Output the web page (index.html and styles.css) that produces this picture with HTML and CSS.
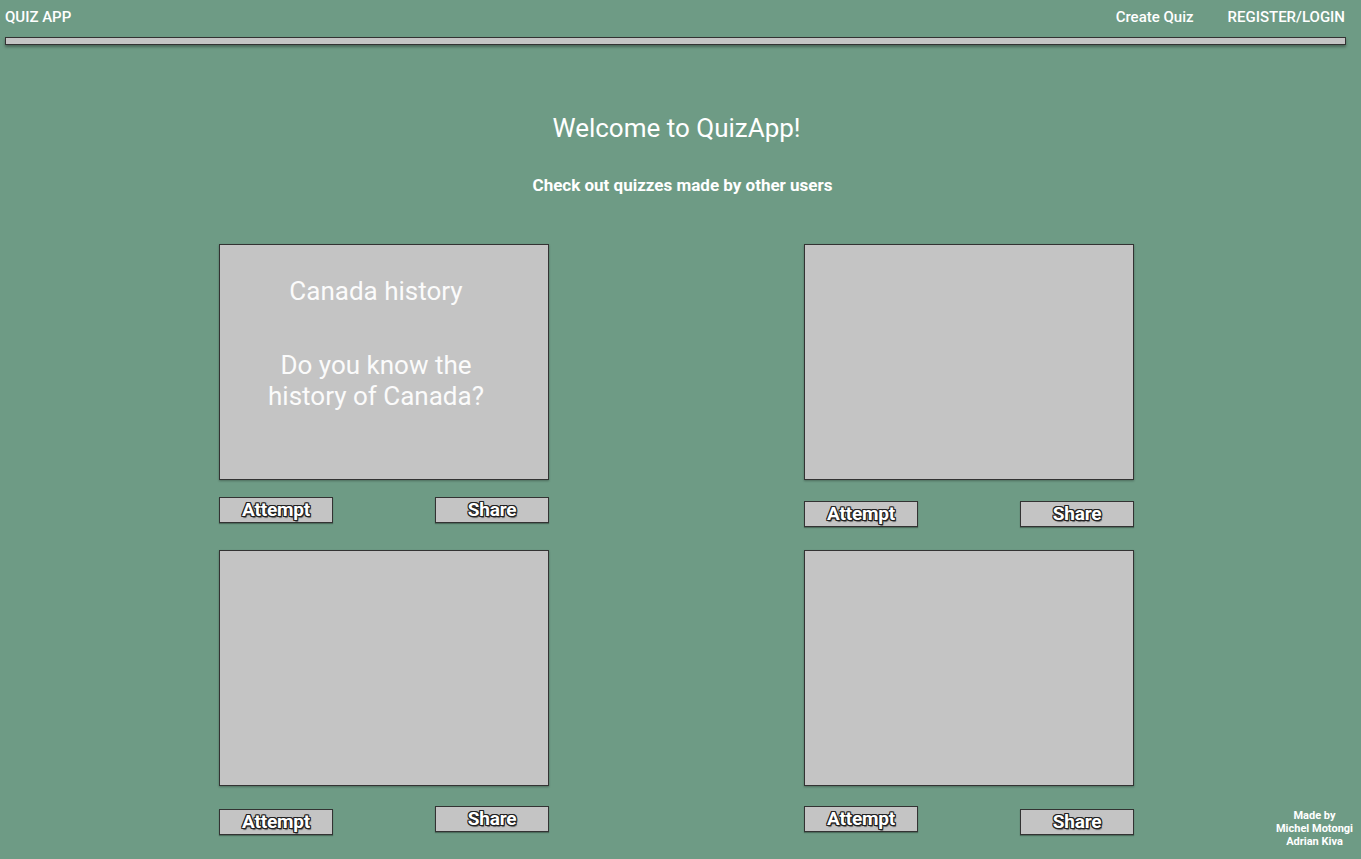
FILE: index.html
```html
<!DOCTYPE html>
<html lang="en">
<head>
<meta charset="utf-8">
<title>Quiz App</title>
<link rel="stylesheet" href="styles.css">
</head>
<body>
<header class="topbar">
  <div class="brand">QUIZ APP</div>
  <nav class="nav">
    <a class="nav-link" href="#">Create Quiz</a>
    <a class="nav-link" href="#">REGISTER/LOGIN</a>
  </nav>
</header>
<div class="rule"></div>
<main class="main">
  <h1 class="title">Welcome to QuizApp!</h1>
  <p class="subtitle">Check out quizzes made by other users</p>
  <section class="grid">
    <div class="quiz">
      <div class="card">
        <div class="card-title">Canada history</div>
        <div class="card-desc">Do you know the<br>history of Canada?</div>
      </div>
      <div class="actions">
        <button class="btn">Attempt</button>
        <button class="btn">Share</button>
      </div>
    </div>
    <div class="quiz">
      <div class="card"></div>
      <div class="actions shift">
        <button class="btn">Attempt</button>
        <button class="btn">Share</button>
      </div>
    </div>
    <div class="quiz">
      <div class="card"></div>
      <div class="actions tight">
        <button class="btn low">Attempt</button>
        <button class="btn">Share</button>
      </div>
    </div>
    <div class="quiz">
      <div class="card"></div>
      <div class="actions tight">
        <button class="btn">Attempt</button>
        <button class="btn low">Share</button>
      </div>
    </div>
  </section>
</main>
<footer class="credits">Made by<br>Michel Motongi<br>Adrian Kiva</footer>
</body>
</html>
```
FILE: styles.css
```css
* { box-sizing: border-box; }
html, body { margin: 0; padding: 0; }
body {
  background: #6e9b85;
  font-family: Roboto, "Noto Sans", sans-serif;
  color: #ffffff;
  width: 1361px;
  height: 859px;
  overflow: hidden;
  position: relative;
}
.topbar {
  display: flex;
  justify-content: space-between;
  align-items: center;
  height: 33px;
  padding: 0 16px 0 5px;
}
.brand {
  font-size: 15px;
  font-weight: 500;
}
.nav { display: flex; gap: 34px; }
.nav-link {
  color: #fff;
  text-decoration: none;
  font-size: 15px;
  font-weight: 500;
}
.rule {
  margin: 4px 15px 0 5px;
  height: 8px;
  background: #c4c4c4;
  border: 1px solid #333;
  box-shadow: 0 2px 3px rgba(0,0,0,0.35);
}
.main {
  padding-right: 8px;
  display: flex;
  flex-direction: column;
  align-items: center;
}
.title {
  margin: 68px 0 0;
  font-size: 26px;
  font-weight: 400;
  line-height: 30px;
}
.subtitle {
  margin: 32px 0 0;
  font-size: 17px;
  font-weight: 700;
  line-height: 20px;
  padding-left: 12px;
}
.grid {
  margin-top: 49px;
  display: grid;
  grid-template-columns: 330px 330px;
  column-gap: 255px;
  row-gap: 23px;
}
.card {
  height: 236px;
  background: #c4c4c4;
  border: 1px solid #333;
  box-shadow: 0 1px 2px rgba(0,0,0,0.3);
  display: flex;
  flex-direction: column;
  align-items: center;
  padding: 31px 16px 0 0;
  color: #fbfbfb;
  font-size: 26px;
  line-height: 31px;
  text-align: center;
}
.card-title { margin-bottom: 43px; }
.actions {
  display: flex;
  justify-content: space-between;
  align-items: flex-start;
  margin-top: 17px;
  height: 26px;
}
.actions.shift { margin-top: 21px; }
.actions.tight { margin-top: 20px; }
.btn {
  width: 114px;
  height: 26px;
  padding: 0;
  background: #c4c4c4;
  border: 1px solid #333;
  box-shadow: 0 1px 1px rgba(0,0,0,0.3);
  font-family: Roboto, "Noto Sans", sans-serif;
  font-size: 19px;
  font-weight: 700;
  line-height: 22px;
  color: #fff;
  letter-spacing: -0.2px;
  text-shadow:
    1px 0 0 #222, -1px 0 0 #222, 0 1px 0 #222, 0 -1px 0 #222,
    1px 1px 0 #222, -1px -1px 0 #222, 1px -1px 0 #222, -1px 1px 0 #222,
    1px 2px 1px rgba(0,0,0,0.5);
}
.btn.low { margin-top: 3px; }
.credits {
  position: absolute;
  right: 8px;
  bottom: 11px;
  text-align: center;
  font-size: 11px;
  font-weight: 700;
  line-height: 13px;
}
```
